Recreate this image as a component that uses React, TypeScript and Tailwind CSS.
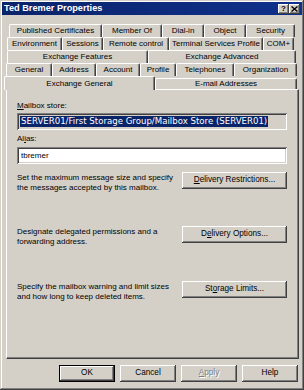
import React from "react";

const raised =
  "bg-[#d4d0c8] shadow-[inset_-1px_-1px_0_#404040,inset_1px_1px_0_#ffffff,inset_-2px_-2px_0_#808080,inset_2px_2px_0_#d4d0c8]";
const sunken =
  "shadow-[inset_1px_1px_0_#808080,inset_-1px_-1px_0_#ffffff,inset_2px_2px_0_#404040,inset_-2px_-2px_0_#d4d0c8]";

const tabRows = [
  {
    cls: "ml-[3px]",
    tabs: [
      ["Published Certificates", "w-[93px]"],
      ["Member Of", "w-[60px]"],
      ["Dial-in", "w-[42px]"],
      ["Object", "w-[42px]"],
      ["Security", "w-[49px]"],
    ],
  },
  {
    cls: "ml-[1px]",
    tabs: [
      ["Environment", "w-[55px]"],
      ["Sessions", "w-[41px]"],
      ["Remote control", "w-[66px]"],
      ["Terminal Services Profile", "w-[94px]"],
      ["COM+", "w-[31px]"],
    ],
  },
  {
    cls: "ml-[1px]",
    tabs: [
      ["Exchange Features", "w-[141px]"],
      ["Exchange Advanced", "w-[148px]"],
    ],
  },
  {
    cls: "ml-0",
    tabs: [
      ["General", "w-[46px]"],
      ["Address", "w-[44px]"],
      ["Account", "w-[44px]"],
      ["Profile", "w-[36px]"],
      ["Telephones", "w-[58px]"],
      ["Organization", "w-[63px]"],
    ],
  },
];

const tabBase =
  "bg-[#d4d0c8] border-t border-l border-r border-t-white border-l-white border-r-[#404040] rounded-t-[2px] shadow-[inset_-1px_0_0_#808080] flex items-center justify-center text-[8px] leading-none text-black whitespace-nowrap";

function Btn({ children, className = "" }: { children: React.ReactNode; className?: string }) {
  return (
    <div className={`${raised} h-[17px] flex items-center justify-center text-[8.2px] leading-none text-black ${className}`}>
      {children}
    </div>
  );
}

function Section({ lines, button, className }: { lines: string[]; button: React.ReactNode; className: string }) {
  return (
    <div className={`flex items-start justify-between ${className}`}>
      <p className="pt-[1px] text-[8px] leading-[10px] text-black whitespace-nowrap">
        {lines[0]}
        <br />
        {lines[1]}
      </p>
      <Btn className="w-[105px] shrink-0">{button}</Btn>
    </div>
  );
}

export default function App() {
  return (
    <div className="w-[304px] h-[390px] bg-[#d4d0c8] p-[2px] flex flex-col font-['Liberation_Sans',Arial,sans-serif] shadow-[inset_-1px_-1px_0_#404040,inset_1px_1px_0_#d4d0c8,inset_-2px_-2px_0_#808080,inset_2px_2px_0_#ffffff]">
      {/* title bar */}
      <div className="h-[13px] bg-gradient-to-r from-[#0a246a] to-[#10308c] flex items-center pl-[2px] pr-[2px]">
        <span className="text-white font-bold text-[9.2px] leading-none">Ted Bremer Properties</span>
        <div className="ml-auto flex">
          <div className={`${raised} w-[11px] h-[10px] flex items-center justify-center text-[8px] font-bold leading-none text-black`}>?</div>
          <div className={`${raised} w-[11px] h-[10px] flex items-center justify-center`}>
            <svg width="7" height="6" viewBox="0 0 7 6">
              <path d="M0.5 0.5 L6.5 5.5 M6.5 0.5 L0.5 5.5" stroke="#000" strokeWidth="1.4" />
            </svg>
          </div>
        </div>
      </div>

      <div className="flex flex-col pl-[4px] pr-[3px] mt-[9px]">
        {/* tabs */}
        {tabRows.map((row, i) => (
          <div key={i} className={`flex h-[13px] ${row.cls}`}>
            {row.tabs.map(([label, w]) => (
              <div key={label} className={`${tabBase} ${w} h-[13px]`}>
                {label}
              </div>
            ))}
          </div>
        ))}
        <div className="flex items-end h-[13px]">
          <div className={`${tabBase} relative z-10 -ml-[2px] w-[151px] h-[14px] -mb-[1px]`}>Exchange General</div>
          <div className={`${tabBase} w-[142px] h-[11px]`}>E-mail Addresses</div>
        </div>

        {/* panel */}
        <div className="h-[270px] border-t border-l border-t-white border-l-white border-r border-b border-r-[#404040] border-b-[#404040] shadow-[inset_-1px_-1px_0_#808080] pl-[10px] pr-[11px] pt-[11px] flex flex-col">
          <div className="h-[10px] text-[8px] leading-[10px] text-black">
            <span className="underline">M</span>ailbox store:
          </div>
          <div className={`${sunken} bg-[#d4d0c8] mt-[2px] h-[17px] pl-[3px] pt-[3px] flex items-start`}>
            <span className="block h-[11px] leading-[11px] bg-[#0a246a] text-white px-[1px] text-[8.6px] font-['DejaVu_Sans',Verdana,sans-serif] whitespace-nowrap">
              SERVER01/First Storage Group/Mailbox Store (SERVER01)
            </span>
          </div>
          <div className="mt-[4px] h-[10px] text-[8px] leading-[10px] text-black">
            Al<span className="underline">i</span>as:
          </div>
          <div className={`${sunken} bg-white mt-[3px] h-[17px] pl-[4px] flex items-center text-[8px] leading-none text-black`}>
            tbremer
          </div>

          <Section
            className="mt-[8px]"
            lines={["Set the maximum message size and specify", "the messages accepted by this mailbox."]}
            button={
              <>
                <span className="underline">D</span>elivery Restrictions...
              </>
            }
          />
          <Section
            className="mt-[33px]"
            lines={["Designate delegated permissions and a", "forwarding address."]}
            button={
              <>
                D<span className="underline">e</span>livery Options...
              </>
            }
          />
          <Section
            className="mt-[34px]"
            lines={["Specify the mailbox warning and limit sizes", "and how long to keep deleted items."]}
            button={
              <>
                St<span className="underline">o</span>rage Limits...
              </>
            }
          />
        </div>

        {/* dialog buttons */}
        <div className="mt-[6px] flex justify-end gap-[5px] pr-[1px]">
          <div className="w-[56px] h-[17px] border border-black">
            <div className={`${raised} h-full flex items-center justify-center text-[8.2px] leading-none text-black`}>OK</div>
          </div>
          <Btn className="w-[56px]">Cancel</Btn>
          <Btn className="w-[56px] text-[#808080]! [text-shadow:1px_1px_0_#ffffff]">
            <span className="underline">A</span>pply
          </Btn>
          <Btn className="w-[56px]">Help</Btn>
        </div>
      </div>
    </div>
  );
}
